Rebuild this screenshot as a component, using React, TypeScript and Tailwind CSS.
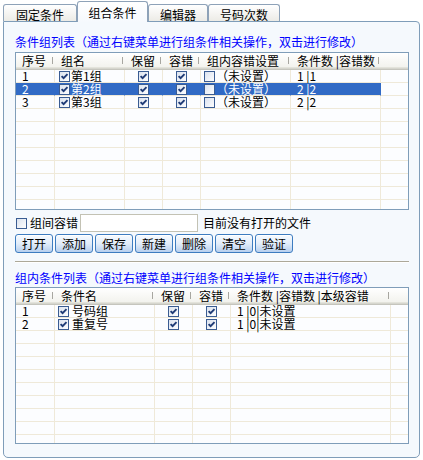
import type { ReactNode } from 'react'
import clsx from 'clsx'

function Check({ on = false }: { on?: boolean }) {
  return (
    <svg width="11" height="11" viewBox="0 0 11 11" className="block shrink-0">
      <defs>
        <linearGradient id="cbg" x1="0" y1="0" x2="1" y2="1">
          <stop offset="0" stopColor="#d9e1ee" />
          <stop offset="1" stopColor="#ffffff" />
        </linearGradient>
      </defs>
      <rect x="0.5" y="0.5" width="10" height="10" fill="url(#cbg)" stroke="#3a5c92" />
      {on && <path d="M2.6 5.1 L4.6 7.2 L8.5 3.1" fill="none" stroke="#1f3b76" strokeWidth="1.9" />}
    </svg>
  )
}

type Row = { cells: ReactNode[]; sel?: boolean }

function ListView({
  widths,
  heads,
  aligns,
  rows,
  height,
}: {
  widths: string[]
  heads: string[]
  aligns: string[]
  rows: Row[]
  height: string
}) {
  return (
    <div className={clsx('w-[394px] overflow-hidden border border-[#7f9db9] bg-[#fcfdff]', height)}>
      <div className="flex h-[17px] bg-gradient-to-b from-white to-[#f0f0ea] shadow-[inset_0_-1px_#c5c5bd,inset_0_-2px_#d6d6ce,inset_0_-3px_#e3e3db]">
        {heads.map((h, i) => (
          <div
            key={i}
            className={clsx(widths[i], 'flex items-center justify-between pb-[2px] pl-[6px] pr-[2px] whitespace-pre')}
          >
            <span>{h}</span>
            {i < heads.length - 1 && <span className="h-[7px] w-px shrink-0 bg-[#a7a6a0]" />}
          </div>
        ))}
      </div>
      {rows.map((r, ri) => (
        <div key={ri} className="flex h-[13px]">
          {widths.map((w, ci) => {
            const last = ci === widths.length - 1
            const sel = r.sel && !last
            return (
              <div
                key={ci}
                className={clsx(
                  w,
                  'flex items-center border-b border-b-[#efe9d9] leading-[12px] whitespace-pre',
                  !last && 'border-r',
                  sel ? 'border-r-[#316ac5] bg-[#316ac5] text-white' : 'border-r-[#efe9d9]',
                  aligns[ci],
                )}
              >
                {r.cells[ci]}
              </div>
            )
          })}
        </div>
      ))}
    </div>
  )
}

function Tab({ children, w, active = false }: { children: ReactNode; w: string; active?: boolean }) {
  return (
    <div
      className={clsx(
        w,
        'rounded-t-[3px] border border-b-0 border-[#8ea2b8] text-center',
        active
          ? 'relative z-10 -mb-px h-[21px] bg-gradient-to-b from-white to-[#f6f9fd] pt-[4px] leading-[14px]'
          : 'h-[17px] bg-gradient-to-b from-white to-[#ecebe6] pt-[3px] leading-[14px]',
      )}
    >
      {children}
    </div>
  )
}

const blank = (n: number): Row[] => Array.from({ length: n }, () => ({ cells: [] }))

export default function App() {
  const topRows: Row[] = [
    {
      cells: [
        '1',
        <><Check on /><span>第1组</span></>,
        <Check on />,
        <Check on />,
        <><Check /><span>（未设置）</span></>,
        '1 |1',
      ],
    },
    {
      sel: true,
      cells: [
        '2',
        <><Check on /><span>第2组</span></>,
        <Check on />,
        <Check on />,
        <><Check /><span>（未设置）</span></>,
        '2 |2',
      ],
    },
    {
      cells: [
        '3',
        <><Check on /><span>第3组</span></>,
        <Check on />,
        <Check on />,
        <><Check /><span>（未设置）</span></>,
        '2 |2',
      ],
    },
    ...blank(8),
  ]

  const bottomRows: Row[] = [
    {
      cells: ['1', <><Check on /><span>号码组</span></>, <Check on />, <Check on />, '1 |0|未设置'],
    },
    {
      cells: ['2', <><Check on /><span>重复号</span></>, <Check on />, <Check on />, '1 |0|未设置'],
    },
    ...blank(9),
  ]

  return (
    <div className="h-[460px] w-[423px] bg-white text-[12px] text-black font-['Noto_Sans_CJK_SC',sans-serif]">
      <div className="flex h-[21px] items-end pl-[3px]">
        <Tab w="w-[74px]">固定条件</Tab>
        <Tab w="w-[71px]" active>组合条件</Tab>
        <Tab w="w-[60px]">编辑器</Tab>
        <Tab w="w-[72px]">号码次数</Tab>
      </div>

      <div className="ml-[3px] flex h-[437px] w-[417px] flex-col rounded-tr-[4px] rounded-b-[5px] border border-[#7f9db9] bg-[#f5f9fd] pl-[11px]">
        <div className="mt-[13px] h-[13px] leading-[13px] whitespace-nowrap text-[#0000ff]">
          条件组列表（通过右键菜单进行组条件相关操作，双击进行修改）
        </div>

        <div className="mt-[4px]">
          <ListView
            height="h-[158px]"
            widths={['w-[39px]', 'w-[70px]', 'w-[38px]', 'w-[38px]', 'w-[90px]', 'w-[90px]', 'flex-1']}
            heads={['序号', '组名', '保留', '容错', '组内容错设置', '条件数 |容错数', '']}
            aligns={['pl-[6px]', 'pl-[4px] gap-[1px]', 'justify-center', 'justify-center', 'pl-[3px] gap-[1px]', 'pl-[6px]', '']}
            rows={topRows}
          />
        </div>

        <div className="mt-[4px] flex h-[18px] items-center">
          <span className="ml-px">
            <Check />
          </span>
          <span className="ml-[3px]">组间容错</span>
          <div className="ml-[2px] h-[18px] w-[118px] border border-[#c3c2b4] bg-white" />
          <span className="ml-[5px]">目前没有打开的文件</span>
        </div>

        <div className="mt-[2px] flex gap-[2px]">
          {['打开', '添加', '保存', '新建', '删除', '清空', '验证'].map(b => (
            <div
              key={b}
              className="h-[19px] w-[38px] rounded-[3px] border border-[#3d7cc0] bg-gradient-to-b from-[#f7fbff] via-[#e2edfa] to-[#b7cfee] text-center leading-[17px] shadow-[inset_0_1px_#fff]"
            >
              {b}
            </div>
          ))}
        </div>

        <div className="mt-[8px] w-[394px] border-t border-b border-t-[#aca899] border-b-white" />

        <div className="mt-[8px] h-[13px] leading-[13px] whitespace-nowrap text-[#0000ff]">
          组内条件列表（通过右键菜单进行组条件相关操作，双击进行修改）
        </div>

        <div className="mt-[3px]">
          <ListView
            height="h-[157px]"
            widths={['w-[39px]', 'w-[100px]', 'w-[38px]', 'w-[38px]', 'w-[160px]', 'flex-1']}
            heads={['序号', '条件名', '保留', '容错', '条件数 |容错数 |本级容错', '']}
            aligns={['pl-[6px]', 'pl-[3px] gap-[3px]', 'justify-center', 'justify-center', 'pl-[6px]', '']}
            rows={bottomRows}
          />
        </div>
      </div>
    </div>
  )
}
